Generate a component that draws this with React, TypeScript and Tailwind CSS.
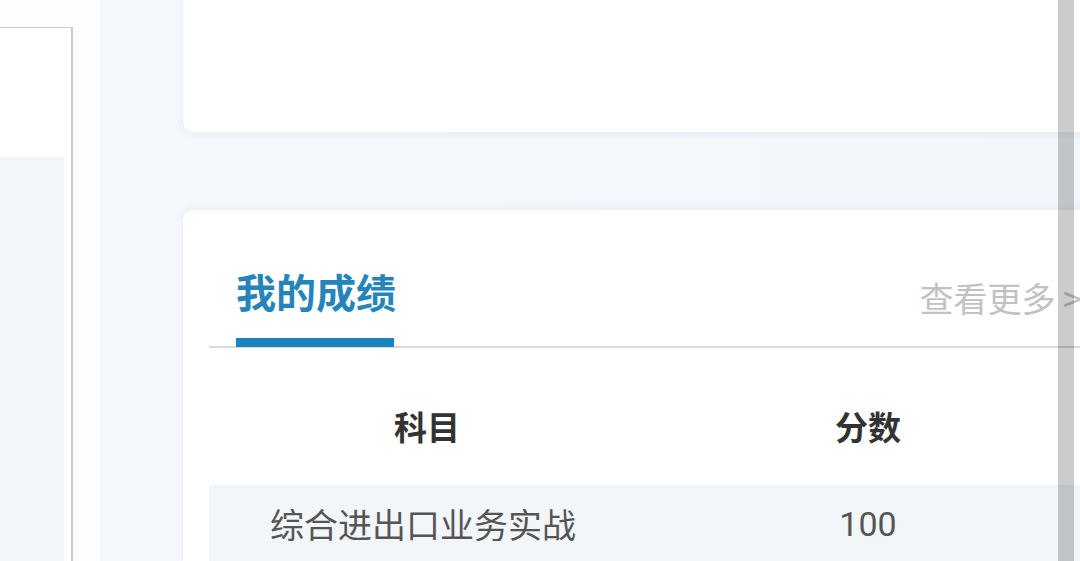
import React from "react";

export default function App() {
  const font = { fontFamily: '"Noto Sans CJK SC", "Noto Sans", sans-serif' };
  return (
    <div
      className="relative flex w-[1080px] h-[561px] overflow-hidden bg-gradient-to-r from-[#f6f9fc] to-[#f2f7fb]"
      style={font}
    >
      {/* left panel */}
      <div className="w-[100px] shrink-0 bg-[#fcfdfe] pt-[27px]">
        <div className="flex h-full w-[73px] flex-col border-t border-r-2 border-[#c9c9c9] bg-white">
          <div className="h-[129px]" />
          <div className="mr-[7px] flex-1 bg-[#f2f6f9]" />
        </div>
      </div>

      {/* main column */}
      <div className="flex w-[1003px] shrink-0 flex-col pl-[83px]">
        <div className="h-[132px] shrink-0 rounded-b-[10px] bg-white shadow-[0_2px_8px_rgba(150,180,210,0.18)]" />
        <div className="mt-[78px] flex-1 rounded-t-[10px] bg-white pl-[26px] shadow-[0_-2px_8px_rgba(150,180,210,0.15)]">
          {/* tabs */}
          <div className="flex items-center justify-between border-b-2 border-[#dadada] pt-[56px]">
            <div className="ml-[27px] flex w-[158px] flex-col">
              <span className="text-[40px] font-bold leading-[51px] text-[#2585bb] whitespace-nowrap">
                我的成绩
              </span>
              <div className="mt-[21px] mb-[-1px] h-[9px] bg-[#1a84bf]" />
            </div>
            <span className="mr-[21px] mb-[17px] text-[34px] leading-[44px] text-[#c2c2c2] whitespace-nowrap">
              查看更多 &gt;
            </span>
          </div>

          {/* table */}
          <div className="grid grid-cols-[436px_446px]">
            <div className="pt-[56px] pb-[37px] text-center text-[33px] font-bold leading-[44px] text-[#333333]">
              科目
            </div>
            <div className="pt-[56px] pb-[37px] text-center text-[33px] font-bold leading-[44px] text-[#333333]">
              分数
            </div>
          </div>
          <div className="grid h-[80px] grid-cols-[436px_446px] bg-[#f2f6f9]">
            <div className="pt-[17px] pl-[61px] text-[34px] leading-[44px] text-[#555555] whitespace-nowrap">
              综合进出口业务实战
            </div>
            <div
              className="pt-[17px] text-center text-[34px] leading-[44px] text-[#555555]"
              style={{ fontFamily: 'Roboto, "Noto Sans CJK SC", sans-serif' }}
            >
              100
            </div>
          </div>
        </div>
      </div>

      {/* scrollbar overlay */}
      <div className="absolute top-0 left-[1058px] h-full w-[16px] bg-[rgba(0,0,0,0.2)]" />
    </div>
  );
}
